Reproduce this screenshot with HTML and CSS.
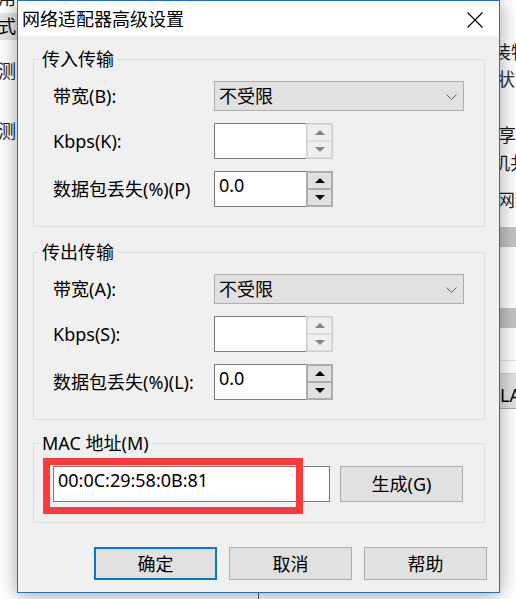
FILE: index.html
```html
<!DOCTYPE html>
<html lang="zh-CN">
<head>
<meta charset="utf-8">
<title>网络适配器高级设置</title>
<link rel="stylesheet" href="styles.css">
</head>
<body>
<div class="backwin">
  <span class="frag frag-l1">使用</span>
  <div class="band band-l"><span class="frag-in">模式</span></div>
  <span class="frag frag-l3">检测</span>
  <span class="frag frag-l4">检测</span>
  <span class="frag frag-r1">装物</span>
  <span class="frag frag-r2">状态</span>
  <span class="frag frag-r3">享共</span>
  <span class="frag frag-r4">机共</span>
  <span class="frag frag-r5">网络</span>
  <div class="band band-r1"></div>
  <div class="band band-r2"></div>
  <div class="rule rule-r"></div>
  <div class="band band-r3">LAN</div>
  <div class="vline"></div>
</div>

<div class="dialog">
  <div class="titlebar">
    <span class="title">网络适配器高级设置</span>
    <svg class="close" width="16" height="16" viewBox="0 0 16 16"><path d="M0.5 0.5L15.5 15.5M15.5 0.5L0.5 15.5" stroke="#000" stroke-width="1.1" fill="none"/></svg>
  </div>
  <div class="content">
    <fieldset class="group">
      <legend>传入传输</legend>
      <div class="rows">
        <span class="lbl">带宽(B):</span>
        <div class="select"><span>不受限</span><svg width="11" height="6" viewBox="0 0 11 6"><path d="M0.5 0.5L5.5 5.5L10.5 0.5" stroke="#606060" fill="none"/></svg></div>
        <span class="lbl">Kbps(K):</span>
        <div class="spin disabled"><div class="field"></div><div class="btns"><span class="sb up"></span><span class="sb down"></span></div></div>
        <span class="lbl">数据包丢失(%)(P)</span>
        <div class="spin"><div class="field">0.0</div><div class="btns"><span class="sb up"></span><span class="sb down"></span></div></div>
      </div>
    </fieldset>

    <fieldset class="group group-out">
      <legend>传出传输</legend>
      <div class="rows">
        <span class="lbl">带宽(A):</span>
        <div class="select"><span>不受限</span><svg width="11" height="6" viewBox="0 0 11 6"><path d="M0.5 0.5L5.5 5.5L10.5 0.5" stroke="#606060" fill="none"/></svg></div>
        <span class="lbl">Kbps(S):</span>
        <div class="spin disabled"><div class="field"></div><div class="btns"><span class="sb up"></span><span class="sb down"></span></div></div>
        <span class="lbl">数据包丢失(%)(L):</span>
        <div class="spin"><div class="field">0.0</div><div class="btns"><span class="sb up"></span><span class="sb down"></span></div></div>
      </div>
    </fieldset>

    <fieldset class="group group-mac">
      <legend>MAC 地址(M)</legend>
      <div class="mac">
        <div class="field mac-field">00:0C:29:58:0B:81</div>
        <button class="btn">生成(G)</button>
        <div class="mark"></div>
      </div>
    </fieldset>

    <div class="actions">
      <button class="btn btn-default">确定</button>
      <button class="btn">取消</button>
      <button class="btn">帮助</button>
    </div>
  </div>
</div>
</body>
</html>
```
FILE: styles.css
```css
html, body {
  margin: 0;
  padding: 0;
}
body {
  width: 516px;
  height: 599px;
  overflow: hidden;
  position: relative;
  background: #fff;
  font-family: "Noto Sans", "Noto Sans CJK SC", sans-serif;
  font-size: 18px;
  color: #000;
}

/* background window fragments */
.backwin {
  position: absolute;
  inset: 0;
  background: #fff;
}
.frag {
  position: absolute;
  line-height: 20px;
  white-space: nowrap;
  color: #1a1a1a;
}
.frag-l1 { left: -20px; top: -12px; }
.band {
  position: absolute;
}
.band-l {
  left: 0; top: 13px; width: 30px; height: 27px;
  background: #e5e5e5;
}
.frag-in {
  position: absolute;
  left: -20px; top: 3px;
  line-height: 20px;
  white-space: nowrap;
}
.frag-l3 { left: -20px; top: 61px; }
.frag-l4 { left: -20px; top: 121px; }
.frag-r1 { left: 493px; top: 42px; }
.frag-r2 { left: 497px; top: 69px; color: #23324a; }
.frag-r3 { left: 498px; top: 125px; }
.frag-r4 { left: 492px; top: 153px; }
.frag-r5 { left: 497px; top: 190px; }
.band-r1 { left: 490px; top: 227px; width: 40px; height: 20px; background: #c4c4c4; }
.band-r2 { left: 490px; top: 308px; width: 40px; height: 20px; background: #c4c4c4; }
.rule-r { position: absolute; left: 490px; top: 360px; width: 40px; height: 1px; background: #e3e3e3; }
.band-r3 {
  left: 490px; top: 373px; width: 40px; height: 36px;
  box-sizing: border-box;
  background: #e1e1e1;
  border-top: 1px solid #d0d0d0;
  border-bottom: 1px solid #adadad;
  padding-left: 10px;
  line-height: 34px;
  padding-top: 4px;
}
.vline { position: absolute; left: 258px; top: 590px; width: 1px; height: 10px; background: #555; }

/* dialog */
.dialog {
  position: absolute;
  left: 17px;
  top: 0;
  width: 483px;
  height: 593px;
  box-sizing: border-box;
  border: 1px solid #2b6db4;
  background: #f0f0f0;
  box-shadow: 0 2px 18px rgba(0, 0, 0, 0.38);
  display: flex;
  flex-direction: column;
  z-index: 2;
}
.titlebar {
  height: 35px;
  flex: none;
  background: #fff;
  display: flex;
  align-items: center;
  justify-content: space-between;
  padding: 0 16px 0 4px;
}
.title {
  line-height: 35px;
  padding-top: 1px;
}
.close { display: block; margin-top: 2px; }

.content {
  flex: 1;
  display: flex;
  flex-direction: column;
  padding: 0 14px 0 15px;
}

.group {
  margin: 13px 0 0;
  padding: 12px 0 19px 0;
  border: 1px solid #dcdcdc;
  min-width: 0;
}
.group-out { margin-top: 15px; }
.group-mac { margin-top: 13px; padding-top: 13px; padding-bottom: 20px; }
legend {
  padding: 0 3px;
  margin-left: 5px;
  line-height: 20px;
}

.rows {
  display: grid;
  grid-template-columns: 161px auto;
  grid-template-rows: 30px 36px 36px;
  row-gap: 12px;
  align-items: center;
  justify-items: start;
  padding-left: 19px;
}
.lbl {
  line-height: 22px;
  white-space: nowrap;
}

.select {
  width: 250px;
  height: 30px;
  box-sizing: border-box;
  border: 1px solid #adadad;
  background: #e1e1e1;
  display: flex;
  align-items: center;
  justify-content: space-between;
  padding: 0 6px 0 4px;
  line-height: 26px;
}
.select svg { display: block; margin-top: 1px; }

.spin {
  display: flex;
  height: 36px;
}
.field {
  background: #fff;
  border: 1px solid #7a7a7a;
  box-sizing: border-box;
  line-height: 26px;
  padding-left: 4px;
  white-space: nowrap;
}
.spin .field {
  width: 92px;
  height: 36px;
  border-right: 0;
}
.btns {
  width: 27px;
  height: 36px;
  box-sizing: border-box;
  border: 1px solid #adadad;
  display: flex;
  flex-direction: column;
}
.sb {
  flex: 1;
  box-sizing: border-box;
  border: 1px solid #adadad;
  background: #e1e1e1;
  display: flex;
  align-items: center;
  justify-content: center;
}
.sb::before {
  content: "";
  width: 0;
  height: 0;
  border-left: 5px solid transparent;
  border-right: 5px solid transparent;
}
.up::before { border-bottom: 5px solid #000; }
.down::before { border-top: 5px solid #000; }
.disabled .btns { border-color: #cccccc; }
.disabled .sb { border-color: #dcdcdc; background: #efefef; }
.disabled .up::before { border-bottom-color: #838383; }
.disabled .down::before { border-top-color: #838383; }

.mac {
  position: relative;
  display: flex;
  gap: 10px;
  padding-left: 19px;
}
.mac-field {
  width: 277px;
  height: 36px;
}
.btn {
  width: 123px;
  height: 36px;
  box-sizing: border-box;
  border: 1px solid #adadad;
  background: #e1e1e1;
  font: inherit;
  color: #000;
  padding: 0;
  margin: 0;
  line-height: 26px;
}
.mark {
  position: absolute;
  left: 9px;
  top: -8px;
  width: 260px;
  height: 56px;
  box-sizing: border-box;
  border: 7px solid #f93b3b;
  pointer-events: none;
}

.actions {
  margin: 24px -2px 0 0;
  display: flex;
  justify-content: flex-end;
  gap: 12px;
}
.actions .btn { height: 33px; }
.btn-default { border: 2px solid #0078d7; }
```
